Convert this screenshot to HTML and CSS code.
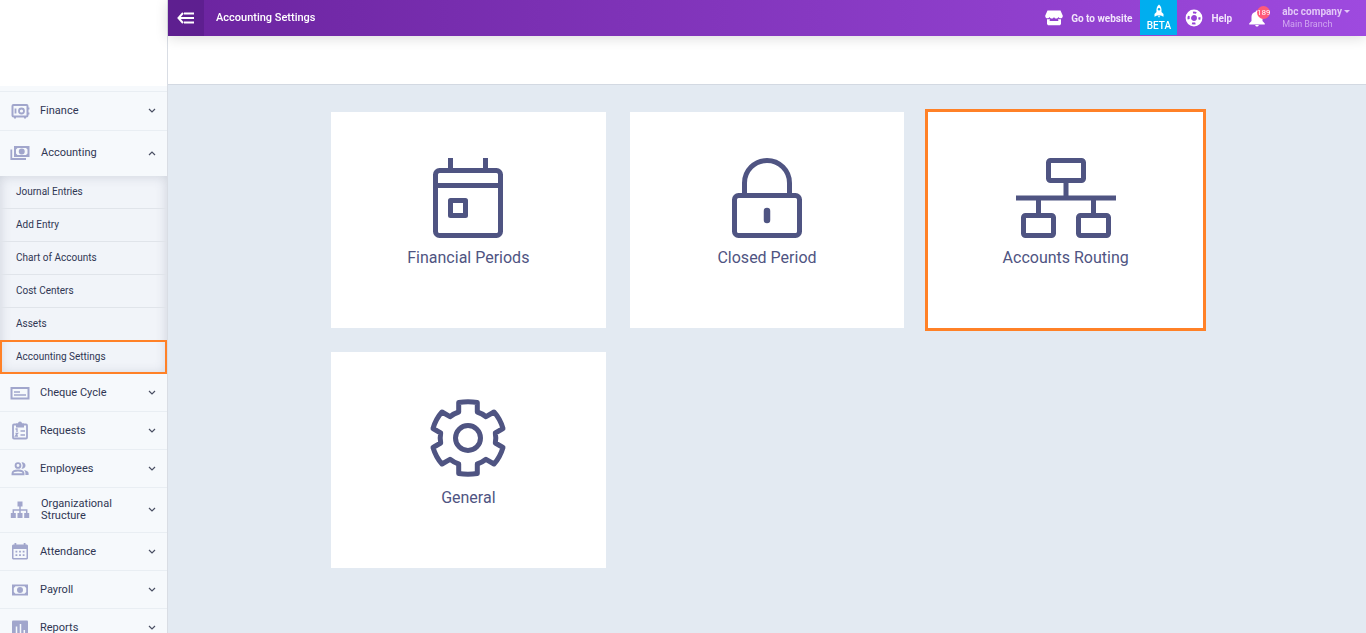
FILE: index.html
```html
<!DOCTYPE html>
<html lang="en">
<head>
    <meta charset="UTF-8">
    <meta name="viewport" content="width=device-width, initial-scale=1.0">
    <title>Accounting Settings</title>
    <link rel="stylesheet" href="styles.css">
</head>
<body>
    <aside class="sidebar">
        <div class="logo"></div>
        <nav class="menu">
            <a href="#" class="menu-item">
                <svg class="menu-icon" viewBox="0 0 20 20"><rect x="2.5" y="4" width="15" height="11.5" rx="1" fill="none" stroke="currentColor" stroke-width="2"/><circle cx="11.5" cy="10" r="2.5" fill="none" stroke="currentColor" stroke-width="1.8"/><path d="M5.500 7.500v5M18.500 6.500v2M18.500 11.500v2M4 16.500h2M14 16.500h2" stroke="currentColor" stroke-width="1.8"/></svg>
                <span class="menu-label">Finance</span>
                <svg class="chevron" viewBox="0 0 8 8"><path d="M1 2l3 3 3-3"/></svg>
            </a>
            <a href="#" class="menu-item open">
                <svg class="menu-icon" viewBox="0 0 20 20"><path fill="currentColor" fill-rule="evenodd" d="M4 3h15.500v11H4zM6 6.500v4l1.500 1.500h8.500l1.500-1.500v-4L16 5H7.500zM11.750 5.500a3 3 0 1 1 0 6 3 3 0 0 1 0-6z"/><path d="M1.300 6.500v9.500H16" fill="none" stroke="currentColor" stroke-width="1.800"/></svg>
                <span class="menu-label">Accounting</span>
                <svg class="chevron" viewBox="0 0 8 8"><path d="M1 6l3-3 3 3"/></svg>
            </a>
            <div class="submenu">
                <a href="#" class="submenu-item">Journal Entries</a>
                <a href="#" class="submenu-item">Add Entry</a>
                <a href="#" class="submenu-item">Chart of Accounts</a>
                <a href="#" class="submenu-item">Cost Centers</a>
                <a href="#" class="submenu-item">Assets</a>
                <a href="#" class="submenu-item active">Accounting Settings</a>
            </div>
            <a href="#" class="menu-item">
                <svg class="menu-icon" viewBox="0 0 20 20"><rect x="1.500" y="5" width="17" height="10.500" fill="none" stroke="currentColor" stroke-width="2"/><path d="M4 9h6M4 12h12" stroke="currentColor" stroke-width="1.500"/></svg>
                <span class="menu-label">Cheque Cycle</span>
                <svg class="chevron" viewBox="0 0 8 8"><path d="M1 2l3 3 3-3"/></svg>
            </a>
            <a href="#" class="menu-item">
                <svg class="menu-icon" viewBox="0 0 20 20"><rect x="3" y="3.500" width="14" height="14" rx="1" fill="none" stroke="currentColor" stroke-width="1.800"/><path fill="currentColor" d="M6 2.500h2a2 2 0 0 1 4 0h2v4H6z"/><path d="M10.500 10H15M10.500 14H15M5.500 8h1.500v3M5.500 12.500h2l-2 2.500h2.500" fill="none" stroke="currentColor" stroke-width="1.300"/></svg>
                <span class="menu-label">Requests</span>
                <svg class="chevron" viewBox="0 0 8 8"><path d="M1 2l3 3 3-3"/></svg>
            </a>
            <a href="#" class="menu-item">
                <svg class="menu-icon" viewBox="0 0 20 20"><circle cx="8" cy="6.500" r="2.400" fill="none" stroke="currentColor" stroke-width="1.900"/><path d="M2.500 15.200v-.8c0-1.800 2.700-2.900 5.500-2.900s5.500 1.100 5.500 2.900v.8z" fill="none" stroke="currentColor" stroke-width="1.900"/><path fill="currentColor" d="M11.500 3.400a3.200 3.200 0 1 1 0 6.200 5 5 0 0 0 0-6.200zM14 10.900c2.600.4 4.600 1.600 4.600 3.300v1.900h-3.200v-2c0-1.300-.5-2.300-1.400-3.200z"/></svg>
                <span class="menu-label">Employees</span>
                <svg class="chevron" viewBox="0 0 8 8"><path d="M1 2l3 3 3-3"/></svg>
            </a>
            <a href="#" class="menu-item tall">
                <svg class="menu-icon" viewBox="0 0 20 20"><path fill="currentColor" d="M7.500 1.500h5v5h-5zM.800 13h5v5h-5zM7.500 13h5v5h-5zM14.200 13h5v5h-5z"/><path d="M10 6v8M3.300 13.500V10h13.400v3.500" fill="none" stroke="currentColor" stroke-width="1.500"/></svg>
                <span class="menu-label">Organizational Structure</span>
                <svg class="chevron" viewBox="0 0 8 8"><path d="M1 2l3 3 3-3"/></svg>
            </a>
            <a href="#" class="menu-item">
                <svg class="menu-icon" viewBox="0 0 20 20"><path fill="currentColor" fill-rule="evenodd" d="M4.500 1h1.800v1.500h7.400V1h1.800v1.500H17l1 1v13l-1 1H3l-1-1v-13l1-1h1.500zM3.500 7v9h13V7z"/><path d="M5.500 9.700h9M5.500 13.200h9" stroke="currentColor" stroke-width="1.800" stroke-dasharray="1.800"/></svg>
                <span class="menu-label">Attendance</span>
                <svg class="chevron" viewBox="0 0 8 8"><path d="M1 2l3 3 3-3"/></svg>
            </a>
            <a href="#" class="menu-item">
                <svg class="menu-icon" viewBox="0 0 20 20"><path fill="currentColor" fill-rule="evenodd" d="M2 4.500h16v11H2zM3.800 8v4l1.700 1.700h9l1.700-1.700V8l-1.700-1.700h-9zM10 7a3 3 0 1 1 0 6 3 3 0 0 1 0-6z"/></svg>
                <span class="menu-label">Payroll</span>
                <svg class="chevron" viewBox="0 0 8 8"><path d="M1 2l3 3 3-3"/></svg>
            </a>
            <a href="#" class="menu-item">
                <svg class="menu-icon" viewBox="0 0 20 20"><rect x="2" y="2.500" width="16" height="15" rx="1" fill="currentColor"/><path d="M6.500 8.500v7M10.500 6V15.500M14.300 12V15.500" stroke="#f6f9fc" stroke-width="1.500"/></svg>
                <span class="menu-label">Reports</span>
                <svg class="chevron" viewBox="0 0 8 8"><path d="M1 2l3 3 3-3"/></svg>
            </a>
        </nav>
    </aside>

    <div class="page">
        <header class="topbar">
            <button type="button" class="toggle" aria-label="Toggle menu">
                <svg width="18" height="12" viewBox="0 0 18 12"><path d="M7 1.500h10M2 6h15M7 10.500h10M6 1L1.500 6 6 11" fill="none" stroke="#fff" stroke-width="2"/></svg>
            </button>
            <h1 class="title">Accounting Settings</h1>
            <a href="#" class="top-link website">
                <svg width="18" height="16" viewBox="0 0 18 16"><path fill="#fff" fill-rule="evenodd" d="M2.500.500h13l2.300 5.300c0 3-3.400 3.300-4.400 1.200-1 2-3.400 2-4.400 0-1 2-3.400 2-4.400 0C3.600 9.100.200 8.800.200 5.800zM2 9.200c1 .2 2 0 2.700-.5V11h8.600V8.700c.7.500 1.700.7 2.700.5V14l-1 1.200H3L2 14z"/></svg>
                <span>Go to website</span>
            </a>
            <a href="#" class="beta">
                <svg width="10" height="14" viewBox="0 0 10 14"><path fill="#fff" fill-rule="evenodd" d="M5 .500c2.300 1.800 2.800 4.400 2.500 7.500l2 2v2.800L7 11.500H3L.500 12.800V10l2-2C2.200 4.900 2.700 2.300 5 .500zM5 4a1.300 1.300 0 1 0 0 2.600A1.300 1.300 0 0 0 5 4zM4 12h2l-1 1.800z"/></svg>
                <span>BETA</span>
            </a>
            <a href="#" class="top-link help">
                <svg width="18" height="18" viewBox="0 0 18 18"><circle cx="9" cy="9" r="7.500" fill="none" stroke="#fff" stroke-width="1.800"/><circle cx="9" cy="9" r="5.500" fill="none" stroke="#fff" stroke-width="4" stroke-dasharray="5.200 3.440" stroke-dashoffset="-1.720"/><circle cx="9" cy="9" r="3.700" fill="none" stroke="#fff" stroke-width="1.500"/></svg>
                <span>Help</span>
            </a>
            <button type="button" class="bell" aria-label="Notifications">
                <svg width="16" height="18" viewBox="0 0 16 18"><path fill="#fff" d="M8 1.500c.8 0 1.300.5 1.300 1.300 2.600.7 4.200 2.500 4.200 5V12l2.300 2.500v.9H.200v-.9L2.500 12V7.800c0-2.500 1.600-4.300 4.200-5 0-.8.500-1.300 1.300-1.300zM6.200 16h3.600c-.2 1-1 1.600-1.800 1.600S6.400 17 6.200 16z"/></svg>
                <span class="badge">189</span>
            </button>
            <button type="button" class="account">
                <span class="company">abc company</span>
                <span class="branch">Main Branch</span>
            </button>
        </header>
        <div class="toolbar"></div>
        <main class="content">
            <div class="cards">
                <a href="#" class="card">
                    <svg class="card-icon" viewBox="0 0 100 80"><rect x="17.500" y="12.500" width="65" height="65" rx="4"/><path d="M17.500 27.500h65M32.500 0v12M67.500 0v12"/><rect x="32.500" y="42.500" width="15" height="15"/></svg>
                    <span>Financial Periods</span>
                </a>
                <a href="#" class="card">
                    <svg class="card-icon" viewBox="0 0 100 80"><rect x="17.500" y="37.500" width="65" height="40" rx="4"/><path d="M27.500 37.500V25a22.500 22.500 0 0 1 45 0v12.500"/><path d="M50 53v9" stroke-width="6.500" stroke-linecap="round"/></svg>
                    <span>Closed Period</span>
                </a>
                <a href="#" class="card highlight">
                    <svg class="card-icon" viewBox="0 0 100 80"><rect x="32.500" y="2.500" width="35" height="20" rx="2"/><rect x="7.500" y="57.500" width="30" height="20" rx="2"/><rect x="62.500" y="57.500" width="30" height="20" rx="2"/><path d="M0 40h100M50 23v17M22.500 40v17M77.500 40v17"/></svg>
                    <span>Accounts Routing</span>
                </a>
                <a href="#" class="card">
                    <svg class="card-icon" viewBox="0 0 100 80"><path transform="translate(50 40)" d="M-9.300-35.500Q0-37 9.300-35.500V-26Q14-24.500 18-21.300L26-26Q32-19.500 35-9.500L27.300-5Q28.300 0 27.300 5L35 9.500Q32 19.500 26 26L18 21.300Q14 24.500 9.300 26V35.500Q0 37-9.300 35.500V26Q-14 24.500-18 21.300L-26 26Q-32 19.500-35 9.500L-27.300 5Q-28.300 0-27.300-5L-35-9.500Q-32-19.500-26-26L-18-21.300Q-14-24.500-9.300-26Z"/><circle cx="50" cy="40" r="12.500"/></svg>
                    <span>General</span>
                </a>
            </div>
        </main>
    </div>
</body>
</html>
```
FILE: styles.css
```css
* {
    box-sizing: border-box;
}

body {
    margin: 0;
    height: 100vh;
    display: flex;
    overflow: hidden;
    font-family: Roboto, Arial, sans-serif;
    font-size: 11px;
    color: #2f3653;
    background-color: #e3eaf2;
}

a {
    color: inherit;
    text-decoration: none;
}

button {
    border: none;
    padding: 0;
    background: none;
    font: inherit;
    color: inherit;
    cursor: pointer;
}

/* Sidebar */
.sidebar {
    width: 168px;
    flex-shrink: 0;
    overflow-y: auto;
    scrollbar-width: none;
    background-color: #f6f9fc;
    border-right: 1px solid #d9dde4;
}

.logo {
    height: 86px;
    background-color: #fff;
}

.menu {
    padding-top: 5px;
}

.menu-item {
    display: flex;
    align-items: center;
    gap: 10px;
    min-height: 38px;
    padding: 0 11px 0 10px;
    border-top: 1px solid #e9eef3;
    line-height: 12px;
}

.menu-item:first-child {
    min-height: 39px;
}

.menu-item.open {
    min-height: 46px;
    padding-bottom: 2px;
    gap: 11px;
}

.menu-item.tall {
    min-height: 45px;
    gap: 11px;
}

.submenu + .menu-item {
    min-height: 37px;
    border-top: none;
}

.menu-icon {
    width: 20px;
    height: 20px;
    flex-shrink: 0;
    color: #a1a6cc;
}

.menu-label {
    flex: 1;
}

.chevron {
    width: 8px;
    height: 8px;
    flex-shrink: 0;
    fill: none;
    stroke: #4a4f63;
    stroke-width: 1.2;
}

.submenu {
    background-color: #f1f4f9;
    box-shadow: inset 0 0 12px rgba(60, 70, 100, 0.2);
}

.submenu-item {
    display: block;
    height: 33px;
    padding: 0 16px;
    border-bottom: 1px solid #e0e4ea;
    font-size: 10px;
    line-height: 32px;
}

.submenu-item.active {
    border: 2px solid #ff8127;
    padding: 0 14px;
    height: 34px;
    margin-top: -1px;
    line-height: 30px;
}

/* Top bar */
.page {
    flex: 1;
    min-width: 0;
    display: flex;
    flex-direction: column;
}

.topbar {
    display: flex;
    align-items: center;
    height: 36px;
    color: #fff;
    background: linear-gradient(to right, #6b249f, #9e4adf);
    box-shadow: 0 2px 14px rgba(0, 0, 0, 0.14);
    z-index: 1;
}

.toggle {
    display: flex;
    align-items: center;
    justify-content: center;
    width: 36px;
    height: 36px;
    background-color: #5e1f90;
}

.title {
    flex: 1;
    margin: 0 12px;
    font-size: 11px;
    font-weight: 500;
    line-height: 12px;
}

.top-link {
    display: flex;
    align-items: center;
    gap: 8px;
    font-size: 10px;
    font-weight: 700;
    color: #f1e4fb;
}

.website {
    margin-right: 8px;
}

.beta {
    display: flex;
    flex-direction: column;
    align-items: center;
    align-self: flex-start;
    width: 37px;
    height: 35px;
    padding-top: 4px;
    background-color: #00aeef;
    font-size: 10px;
    font-weight: 500;
    line-height: 15px;
}

.help {
    margin-left: 8px;
}

.bell {
    position: relative;
    display: flex;
    margin: 0 17px;
}

.badge {
    position: absolute;
    top: -3px;
    right: -5px;
    width: 13px;
    height: 13px;
    border-radius: 50%;
    background-color: #ff5a7a;
    font-size: 8px;
    line-height: 13px;
    display: flex;
    justify-content: center;
}

.account {
    margin-right: 16px;
    text-align: left;
}

.company,
.branch {
    display: block;
    font-size: 10px;
    line-height: 12px;
}

.company {
    font-weight: 700;
    color: #e2c8f7;
}

.company::after {
    content: "";
    display: inline-block;
    margin-left: 2px;
    vertical-align: 2px;
    border-top: 3px solid;
    border-left: 3px solid transparent;
    border-right: 3px solid transparent;
}

.branch {
    font-size: 9px;
    color: #d0a6f0;
}

.toolbar {
    height: 49px;
    background-color: #fff;
    border-bottom: 1px solid #d3d9e2;
}

/* Settings cards */
.content {
    flex: 1;
    padding: 27px 24px;
}

.cards {
    display: grid;
    grid-template-columns: repeat(3, 1fr);
    gap: 24px;
    max-width: 872px;
    margin: 0 auto;
}

.card {
    display: flex;
    flex-direction: column;
    align-items: center;
    gap: 9px;
    min-height: 216px;
    padding: 46px 16px;
    background-color: #fff;
    color: #4f5482;
    font-size: 16px;
    line-height: 22px;
}

.card.highlight {
    outline: 3px solid #ff8127;
}

.card-icon {
    width: 100px;
    height: 80px;
    fill: none;
    stroke: #4f5482;
    stroke-width: 5;
    stroke-linejoin: round;
}
```
